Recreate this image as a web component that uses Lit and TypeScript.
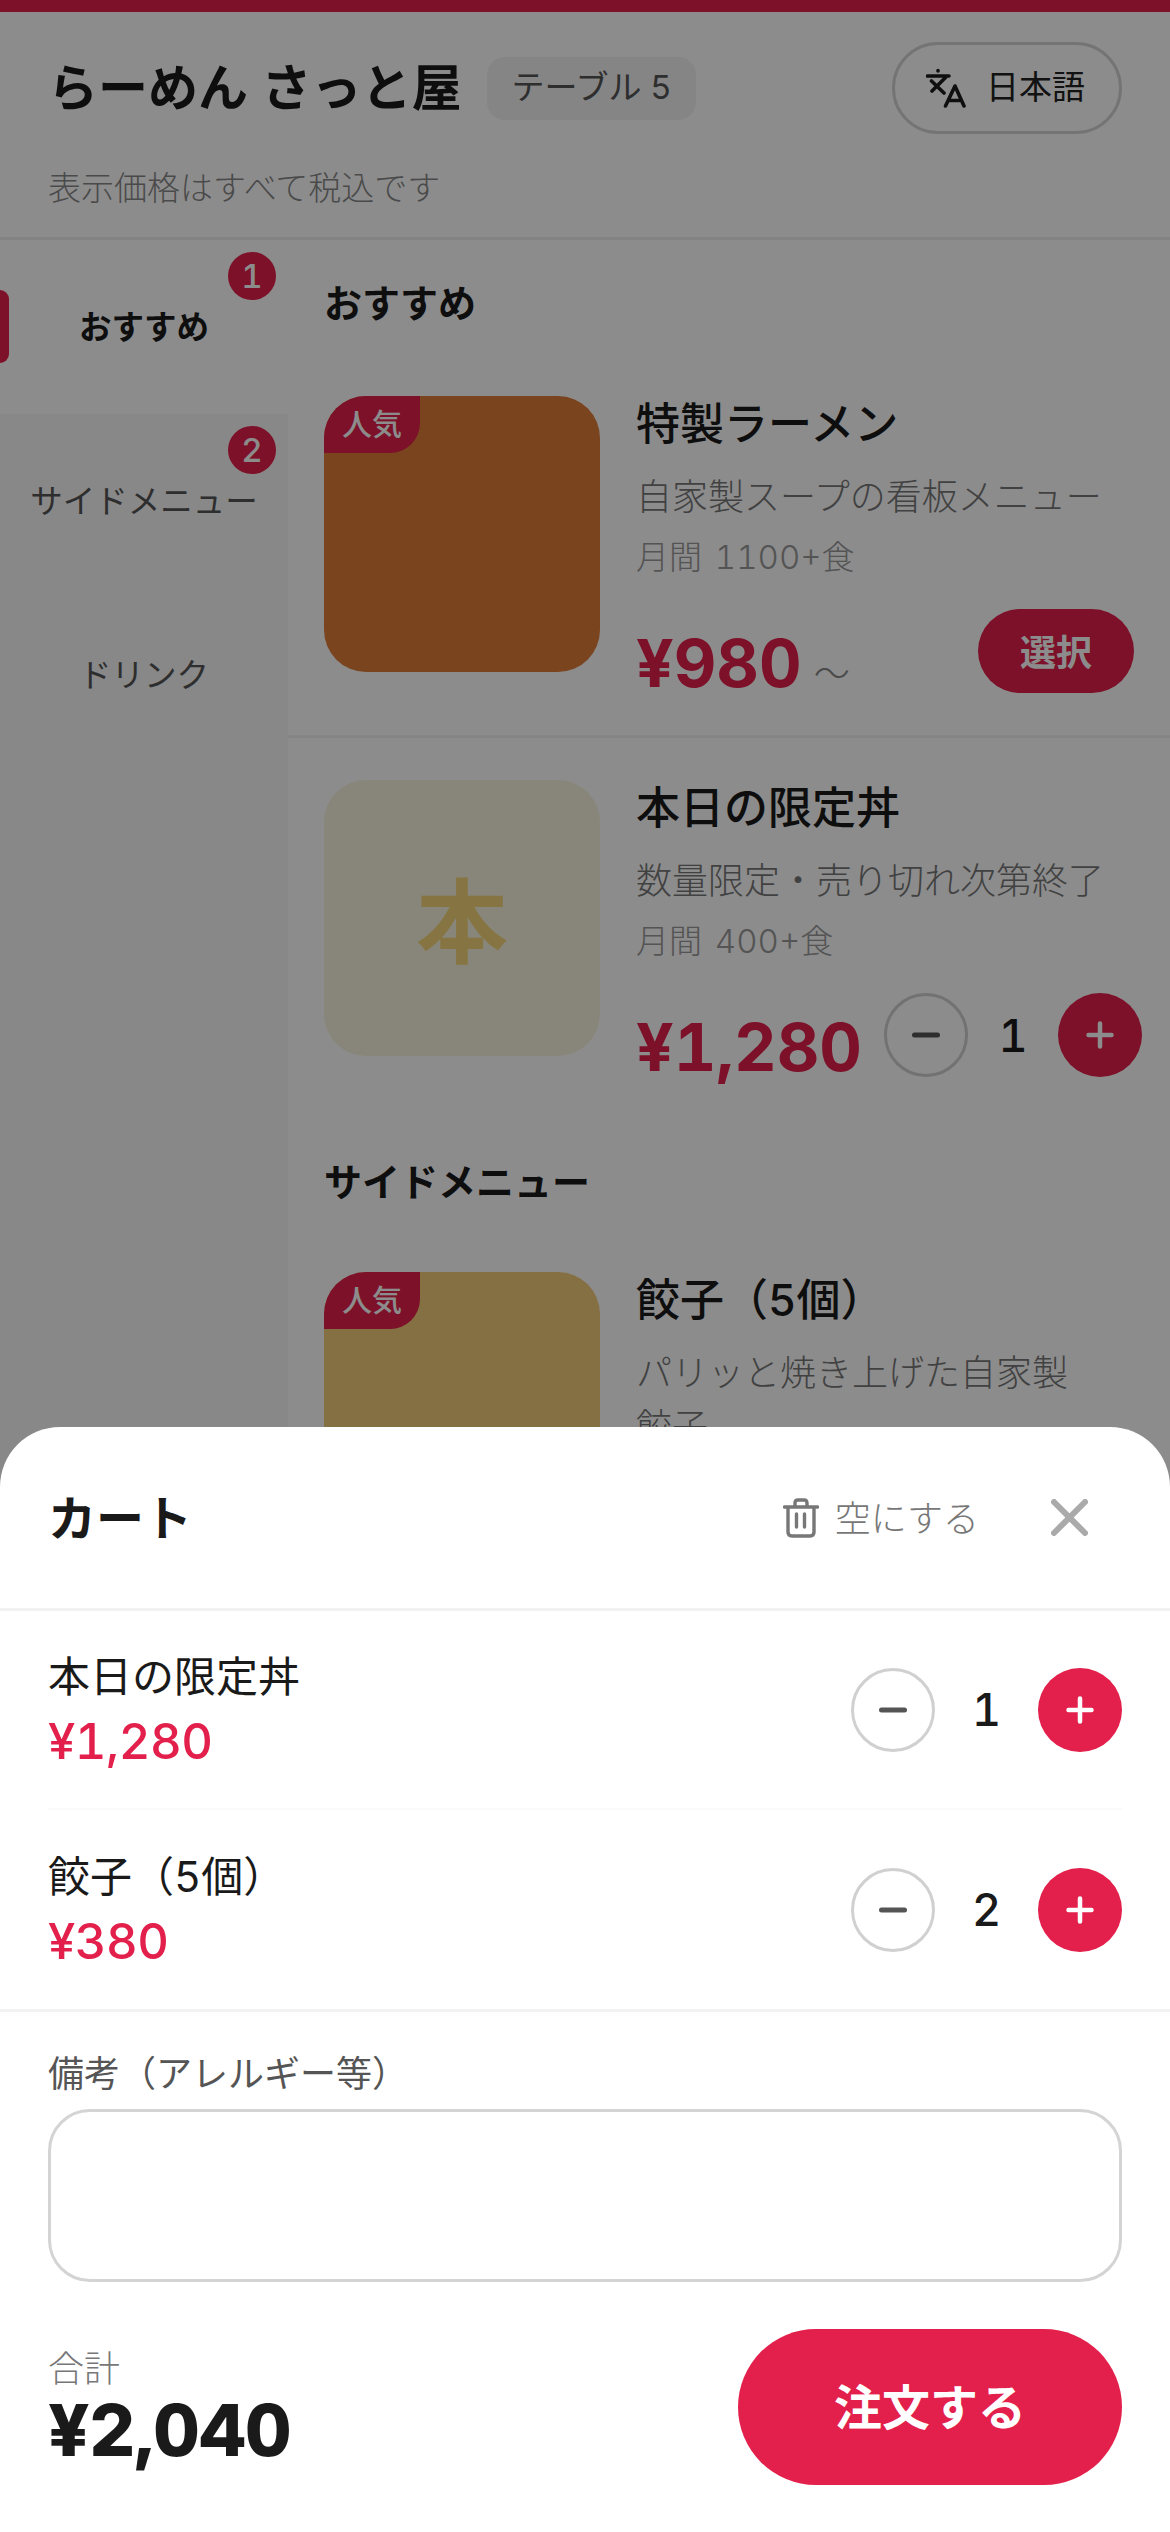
import { LitElement, html, css, nothing } from 'lit';
import { customElement } from 'lit/decorators.js';

const minusIcon = html`<svg width="30" height="30" viewBox="0 0 30 30"><path d="M3.500 15h23" stroke="#555" stroke-width="5" stroke-linecap="round" /></svg>`;
const plusIcon = html`<svg width="30" height="30" viewBox="0 0 30 30"><path d="M3.500 15h23M15 3.500v23" stroke="#fff" stroke-width="4.5" stroke-linecap="round" /></svg>`;

const translateIcon = html`<svg class="lang-icon" width="40" height="40" viewBox="0 0 40 40" fill="none" stroke="#1c1c1c" stroke-width="3.6" stroke-linecap="round" stroke-linejoin="round">
  <path d="M12 2.500v.4M1.500 8h21.500M19.500 9.500 6 23M5.500 13 18 25M19.500 38 29 18l9 20M22.500 32.500h12.500" />
</svg>`;

const trashIcon = html`<svg width="36" height="40" viewBox="0 0 36 40" fill="none" stroke="#777" stroke-width="3.4" stroke-linecap="round" stroke-linejoin="round">
  <path d="M1.500 9h33M12 9V5q0-3 3-3h6q3 0 3 3v4M5 9v25q0 4 4 4h18q4 0 4-4V9M13.500 16v13M21.500 16v13" />
</svg>`;

const closeIcon = html`<svg width="37" height="37" viewBox="0 0 37 37" fill="none" stroke="#aaa" stroke-width="6" stroke-linecap="round"><path d="M3 3l31 31M34 3 3 34" /></svg>`;

interface Dish {
  name: string;
  desc: string;
  meta?: string;
  price: string;
  tint: string;
  glyph?: string;
  glyphColor?: string;
  hot?: boolean;
  from?: boolean;
  qty?: number;
}

const sections: { title: string; dishes: Dish[] }[] = [
  {
    title: 'おすすめ',
    dishes: [
      { name: '特製ラーメン', desc: '自家製スープの看板メニュー', meta: '月間 1100+食', price: '¥980', tint: '#de7c3a', hot: true, from: true },
      { name: '本日の限定丼', desc: '数量限定・売り切れ次第終了', meta: '月間 400+食', price: '¥1,280', tint: '#f7f5de', glyph: '本', glyphColor: '#f4d67a', qty: 1 },
    ],
  },
  {
    title: 'サイドメニュー',
    dishes: [
      { name: '餃子（5個）', desc: 'パリッと焼き上げた自家製\n餃子', price: '¥380', tint: '#f3cc7a', hot: true },
    ],
  },
];

const cart = [
  { name: '本日の限定丼', price: '¥1,280', qty: 1 },
  { name: '餃子（5個）', price: '¥380', qty: 2 },
];

@customElement('app-root')
export class AppRoot extends LitElement {
  static styles = css`
    :host {
      display: block;
      position: relative;
      width: 1170px;
      height: 2532px;
      overflow: hidden;
      background: #fff;
      color: #1a1a1a;
      font-family: Inter, "Noto Sans CJK JP", sans-serif;
      font-variant-numeric: tabular-nums;
    }
    * {
      box-sizing: border-box;
    }
    .topbar {
      height: 12px;
      background: #e31f4b;
    }
    .header {
      padding: 30px 48px 25px;
      border-bottom: 3px solid #efefef;
    }
    .header-row {
      display: flex;
      align-items: center;
    }
    .shop {
      font-size: 50px;
      font-weight: 700;
      line-height: 60px;
      white-space: nowrap;
    }
    .table {
      margin-left: 26px;
      height: 63px;
      padding: 0 24px 6px;
      display: flex;
      align-items: center;
      border-radius: 18px;
      background: #f2f2f2;
      color: #555;
      font-size: 33px;
    }
    .lang {
      margin-left: auto;
      width: 230px;
      height: 92px;
      display: flex;
      align-items: center;
      gap: 20px;
      padding-left: 31px;
      border: 3px solid #d4d4d4;
      border-radius: 46px;
      font-size: 33px;
      color: #222;
    }
    .lang span {
      padding-bottom: 6px;
    }
    .lang-icon {
      flex: none;
    }
    .note {
      margin-top: 30px;
      font-size: 33px;
      line-height: 48px;
      font-weight: 300;
      color: #888;
    }
    .body {
      display: flex;
    }
    .side {
      flex: none;
      width: 288px;
      height: 1300px;
      background: #f7f7f7;
    }
    .side-item {
      position: relative;
      height: 174px;
      padding-bottom: 6px;
      display: flex;
      align-items: center;
      justify-content: center;
      font-size: 32.500px;
      color: #555;
    }
    .side-item.active {
      background: #fff;
      color: #1a1a1a;
      font-weight: 700;
    }
    .side-item.active::before {
      content: '';
      position: absolute;
      left: 0;
      top: 50px;
      width: 9px;
      height: 73px;
      background: #e31f4b;
      border-radius: 0 9px 9px 0;
    }
    .count {
      position: absolute;
      top: 12px;
      right: 12px;
      width: 48px;
      height: 48px;
      border-radius: 50%;
      display: flex;
      align-items: center;
      justify-content: center;
      background: #e31f4b;
      color: #fff;
      font-size: 33px;
      font-weight: 500;
    }
    .list {
      flex: 1;
      min-width: 0;
    }
    .section {
      padding-top: 36px;
    }
    .section-title {
      padding-left: 36px;
      font-size: 38px;
      line-height: 54px;
      font-weight: 700;
      margin-bottom: 24px;
    }
    .section + .section .section-title {
      margin-bottom: 21px;
    }
    .dish {
      display: flex;
      gap: 36px;
      padding: 42px 36px;
      border-bottom: 3px solid #f2f2f2;
    }
    .dish:last-child {
      border-bottom: none;
    }
    .thumb {
      position: relative;
      flex: none;
      width: 276px;
      height: 276px;
      border-radius: 42px;
      overflow: hidden;
      display: flex;
      align-items: center;
      justify-content: center;
      padding-bottom: 6px;
      font-size: 92px;
      font-weight: 700;
    }
    .hot {
      position: absolute;
      left: 0;
      top: 0;
      width: 96px;
      height: 57px;
      padding-bottom: 6px;
      display: flex;
      align-items: center;
      justify-content: center;
      border-radius: 0 0 30px 0;
      background: #e31f4b;
      color: #fff;
      font-size: 30px;
      font-weight: 500;
    }
    .dish-main {
      flex: 1;
      min-width: 0;
    }
    .dish-name {
      font-size: 44px;
      line-height: 56px;
      font-weight: 500;
    }
    .dish-desc {
      margin-top: 18px;
      font-size: 36px;
      line-height: 54px;
      font-weight: 300;
      color: #777;
      white-space: pre-line;
    }
    .dish-meta {
      margin-top: 10px;
      font-size: 33px;
      line-height: 46px;
      font-weight: 300;
      word-spacing: 4px;
      color: #999;
    }
    .buy {
      margin-top: 29px;
      height: 84px;
      display: flex;
      align-items: center;
      justify-content: space-between;
      gap: 22px;
    }
    .price-wrap {
      flex: none;
      display: flex;
      align-items: baseline;
      gap: 12px;
      padding-top: 24px;
    }
    .price {
      font-size: 66px;
      font-weight: 700;
      color: #e31f4b;
      line-height: 84px;
    }
    .from {
      font-size: 36px;
      font-weight: 300;
      color: #888;
    }
    .pick {
      flex: none;
      width: 156px;
      height: 84px;
      padding-bottom: 3px;
      border-radius: 42px;
      display: flex;
      align-items: center;
      justify-content: center;
      background: #e31f4b;
      color: #fff;
      font-size: 36px;
      font-weight: 700;
    }
    .stepper {
      flex: none;
      display: flex;
      align-items: center;
    }
    .step {
      flex: none;
      width: 84px;
      height: 84px;
      border-radius: 50%;
      display: flex;
      align-items: center;
      justify-content: center;
    }
    .step.minus {
      border: 3px solid #d0d0d0;
      background: #fff;
    }
    .step.plus {
      background: #e31f4b;
    }
    .qty {
      width: 90px;
      text-align: center;
      font-size: 45px;
      font-weight: 500;
    }
    .stepper.wide .qty {
      width: 103px;
    }
    .scrim {
      position: absolute;
      inset: 0;
      background: rgba(0, 0, 0, 0.45);
    }
    .sheet {
      position: absolute;
      left: 0;
      right: 0;
      bottom: 0;
      height: 1105px;
      background: #fff;
      border-radius: 60px 60px 0 0;
    }
    .sheet-head {
      height: 184px;
      padding: 0 48px;
      display: flex;
      align-items: center;
      border-bottom: 3px solid #f2f2f2;
    }
    .sheet-title {
      padding-bottom: 6px;
      font-size: 48px;
      font-weight: 700;
    }
    .clear {
      margin-left: auto;
      display: flex;
      align-items: center;
      gap: 16px;
      font-size: 36px;
      font-weight: 300;
      color: #777;
    }
    .clear span {
      padding-bottom: 3px;
    }
    .close {
      margin-left: 72px;
      margin-right: 34px;
      display: flex;
    }
    .items {
      padding: 0 48px;
      border-bottom: 3px solid #f2f2f2;
    }
    .item {
      height: 199px;
      display: flex;
      align-items: center;
      justify-content: space-between;
      border-bottom: 2px solid #fafafa;
    }
    .item:last-child {
      border-bottom: none;
    }
    .item-name {
      font-size: 42px;
      line-height: 60px;
    }
    .item-price {
      margin-top: 5px;
      font-size: 49px;
      line-height: 60px;
      font-weight: 500;
      letter-spacing: -0.5px;
      color: #e31f4b;
    }
    .notes {
      padding: 38px 48px 0;
    }
    .notes-label {
      font-size: 36px;
      line-height: 48px;
      color: #555;
    }
    .notes-box {
      display: block;
      width: 100%;
      height: 173px;
      margin-top: 11px;
      border: 3px solid #d4d4d4;
      border-radius: 42px;
      background: #fff;
    }
    .foot {
      margin-top: 47px;
      padding: 0 48px;
      display: flex;
      align-items: center;
      justify-content: space-between;
    }
    .total-label {
      font-size: 36px;
      line-height: 46px;
      font-weight: 300;
      color: #777;
    }
    .total {
      font-size: 72px;
      line-height: 76px;
      font-weight: 800;
      letter-spacing: -0.7px;
    }
    .order {
      width: 384px;
      height: 156px;
      padding-bottom: 6px;
      border-radius: 78px;
      display: flex;
      align-items: center;
      justify-content: center;
      background: #e31f4b;
      color: #fff;
      font-size: 48px;
      font-weight: 700;
    }
  `;

  private stepper(qty: number, wide = false) {
    return html`
      <div class="stepper ${wide ? 'wide' : ''}">
        <div class="step minus">${minusIcon}</div>
        <div class="qty">${qty}</div>
        <div class="step plus">${plusIcon}</div>
      </div>
    `;
  }

  private dish(d: Dish) {
    return html`
      <div class="dish">
        <div class="thumb" style="background:${d.tint};color:${d.glyphColor ?? 'inherit'}">
          ${d.glyph ?? nothing}
          ${d.hot ? html`<div class="hot">人気</div>` : nothing}
        </div>
        <div class="dish-main">
          <div class="dish-name">${d.name}</div>
          <div class="dish-desc">${d.desc}</div>
          ${d.meta ? html`<div class="dish-meta">${d.meta}</div>` : nothing}
          <div class="buy">
            <div class="price-wrap">
              <span class="price">${d.price}</span>
              ${d.from ? html`<span class="from">〜</span>` : nothing}
            </div>
            ${d.qty ? this.stepper(d.qty) : html`<div class="pick">選択</div>`}
          </div>
        </div>
      </div>
    `;
  }

  render() {
    return html`
      <div class="topbar"></div>
      <div class="header">
        <div class="header-row">
          <div class="shop">らーめん さっと屋</div>
          <div class="table">テーブル 5</div>
          <div class="lang">${translateIcon}<span>日本語</span></div>
        </div>
        <div class="note">表示価格はすべて税込です</div>
      </div>
      <div class="body">
        <div class="side">
          <div class="side-item active">おすすめ<span class="count">1</span></div>
          <div class="side-item">サイドメニュー<span class="count">2</span></div>
          <div class="side-item">ドリンク</div>
        </div>
        <div class="list">
          ${sections.map((s) => html`
            <div class="section">
              <div class="section-title">${s.title}</div>
              ${s.dishes.map((d) => this.dish(d))}
            </div>
          `)}
        </div>
      </div>
      <div class="scrim"></div>
      <div class="sheet">
        <div class="sheet-head">
          <div class="sheet-title">カート</div>
          <div class="clear">${trashIcon}<span>空にする</span></div>
          <div class="close">${closeIcon}</div>
        </div>
        <div class="items">
          ${cart.map((c) => html`
            <div class="item">
              <div>
                <div class="item-name">${c.name}</div>
                <div class="item-price">${c.price}</div>
              </div>
              ${this.stepper(c.qty, true)}
            </div>
          `)}
        </div>
        <div class="notes">
          <div class="notes-label">備考（アレルギー等）</div>
          <div class="notes-box"></div>
        </div>
        <div class="foot">
          <div>
            <div class="total-label">合計</div>
            <div class="total">¥2,040</div>
          </div>
          <div class="order">注文する</div>
        </div>
      </div>
    `;
  }
}
